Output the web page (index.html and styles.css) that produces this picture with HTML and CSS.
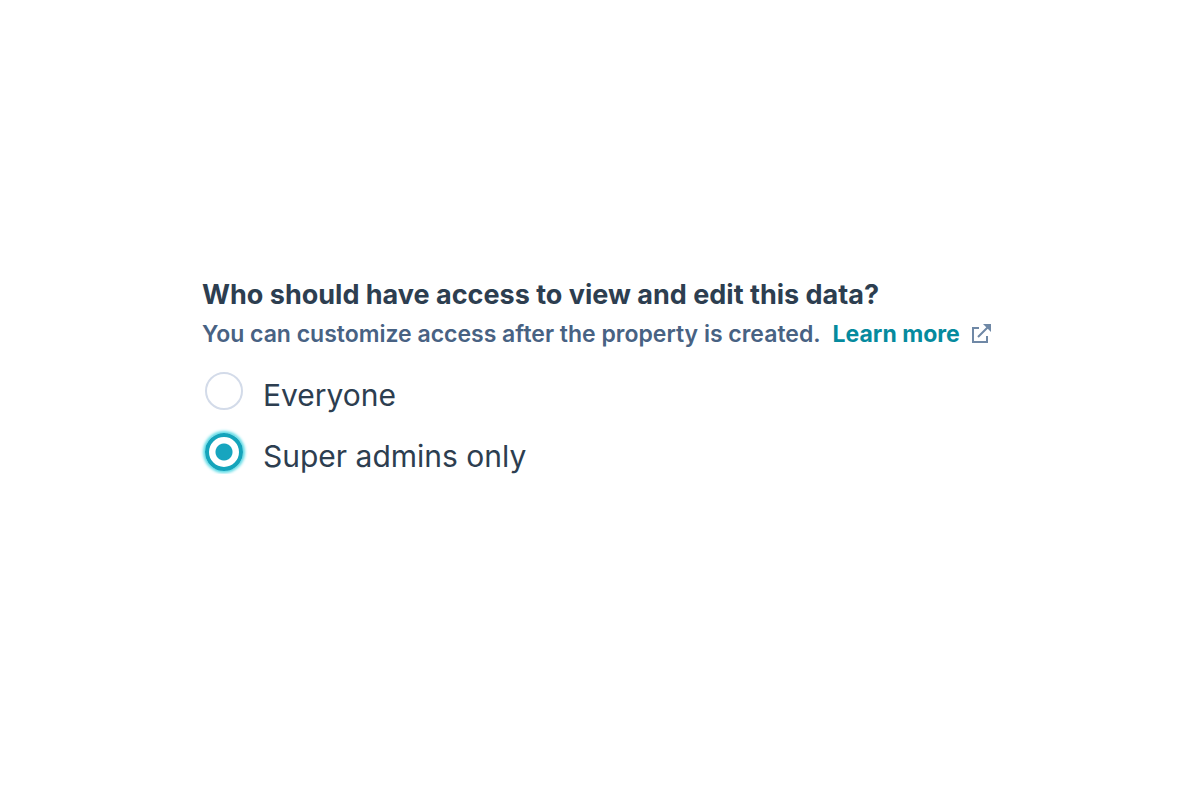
FILE: index.html
```html
<!DOCTYPE html>
<html lang="en">
<head>
<meta charset="utf-8">
<meta name="viewport" content="width=device-width, initial-scale=1">
<title>Data access</title>
<link rel="stylesheet" href="styles.css">
</head>
<body>
<main class="page">
  <fieldset class="access" aria-describedby="access-help">
    <legend class="access-title">Who should have access to view and edit this data?</legend>
    <p class="access-help" id="access-help">
      <span>You can customize access after the property is created.</span>
      <a class="access-link" href="#">Learn more
        <svg class="external" viewBox="0 0 22 22" aria-hidden="true"><path d="M9 5H3v14h14v-6M8 14 18 4"/><path class="external-head" d="M13 1h8v8l-3-3-2-2z"/></svg>
      </a>
    </p>
    <div class="options">
      <label class="option"><input class="radio" type="radio" name="access" value="everyone"><span class="option-text">Everyone</span></label>
      <label class="option"><input class="radio" type="radio" name="access" value="admins" checked><span class="option-text">Super admins only</span></label>
    </div>
  </fieldset>
</main>
</body>
</html>
```
FILE: styles.css
```css
* {
  box-sizing: border-box;
}

body {
  margin: 0;
  background: #fff;
  color: #2d3e50;
  font-family: Inter, "Liberation Sans", sans-serif;
}

.page {
  padding: 276px 200px 0 202px;
}

.access {
  margin: 0;
  padding: 0;
  border: 0;
}

.access-title {
  padding: 0;
  font-size: 27px;
  font-weight: 700;
  line-height: 38px;
}

.access-help {
  display: flex;
  gap: 12px;
  margin: 0;
  color: #486283;
  font-size: 23px;
  font-weight: 600;
  line-height: 40px;
  white-space: nowrap;
}

.access-link {
  display: flex;
  align-items: center;
  gap: 10px;
  color: #058a9e;
  font-weight: 700;
  text-decoration: none;
}

.external {
  width: 22px;
  height: 22px;
  fill: none;
  stroke: #6f88a6;
  stroke-width: 2;
}

.external-head {
  fill: #6f88a6;
  stroke: none;
}

.options {
  display: grid;
  gap: 20px;
  padding-top: 18px;
}

.option {
  display: flex;
  gap: 20px;
  cursor: pointer;
}

.radio {
  appearance: none;
  flex: none;
  width: 38px;
  height: 38px;
  margin: 0 0 0 3px;
  border: 2px solid #d3dbe9;
  border-radius: 50%;
}

.radio:checked {
  border: 4px solid #14a4bb;
  background: radial-gradient(circle, #17a5bf 8px, #fff 9px);
  box-shadow: 0 0 3px 2px #5bdbe6;
}

.option-text {
  padding-top: 5px;
  font-size: 30px;
  line-height: 36px;
}
```
